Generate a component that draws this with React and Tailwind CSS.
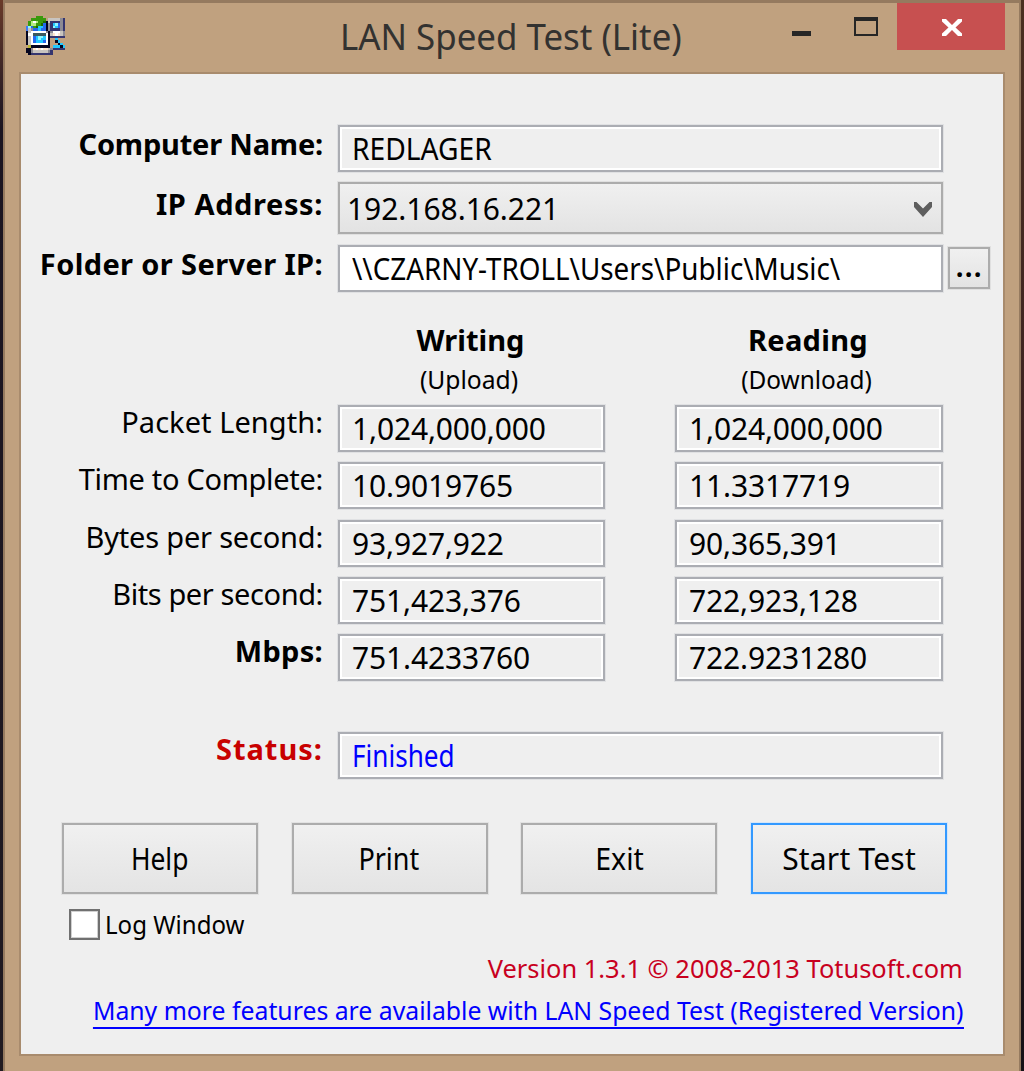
import React from "react";

const PALETTE = {
  K: "#05051f",
  N: "#35356f",
  W: "#ffffff",
  G: "#c8c4c0",
  S: "#8c8a94",
  T: "#3a5a60",
  g: "#3a9a0c",
  D: "#1d6a00",
  L: "#b4ec80",
  B: "#2468ee",
  b: "#3f7af5",
  C: "#22c8ff",
  c: "#8ff8ff",
  Y: "#ffe6cf",
  y: "#b8b432",
};

const ICON = [
  "....ggg.........",
  "..gggggg.GGGGGSN",
  ".gLWLggDKGNNNNSN",
  ".gLLggDBKSNCcBSN",
  "bcBgDCCBKSNcCBSN",
  "bGSBBCBBKSNNNNSN",
  "KGWWWWWWSKSWWWGS",
  "KWWTTTTTWKGYWYGS",
  "KGWBCccCWKNNNNNN",
  "KGWBCcCCWK..C...",
  "KGWBCCCBWK..KC..",
  "KGWWWWWWWK...KC.",
  ".yKKKKKKKK.CCCKC",
  "KKSYWYWYYGSNNNNN",
  "KKSGGGGGGSN.....",
  ".KNNNNNNNNN.....",
];

function AppIcon() {
  return (
    <svg className="h-[39px] w-[39px]" viewBox="0 0 16 16" shapeRendering="crispEdges">
      {ICON.flatMap((row, y) =>
        [...row].map((k, x) =>
          k === "." ? null : (
            <rect key={x + "-" + y} x={x} y={y} width="1.02" height="1.02" fill={PALETTE[k]} />
          )
        )
      )}
    </svg>
  );
}

function Label({ children, className }) {
  return (
    <div className={"w-[301px] shrink-0 text-right text-[29px] whitespace-nowrap " + className}>
      {children}
    </div>
  );
}

function Field({ children, className }) {
  return (
    <div
      className={
        "flex h-[47px] shrink-0 items-center border-2 border-[#abadb3] bg-[#efefef] pl-[12px] text-[30px] whitespace-nowrap inset-ring-2 inset-ring-white shadow-[0_0_0_1px_#e0e1e3] " +
        className
      }
    >
      {children}
    </div>
  );
}

function Button({ children, className = "border-[#acacac] shadow-[0_0_0_1px_#e2e2e2]" }) {
  return (
    <button
      className={
        "flex h-[71px] w-[196px] items-center justify-center border-2 bg-linear-to-b from-[#f0f0f0] to-[#e4e4e4] text-[30px] whitespace-nowrap " +
        className
      }
    >
      {children}
    </button>
  );
}

const RESULTS = [
  ["Packet Length:", "tracking-[0.05px]", "1,024,000,000", "1,024,000,000"],
  ["Time to Complete:", "tracking-[-0.3px]", "10.9019765", "11.3317719"],
  ["Bytes per second:", "tracking-[-0.2px]", "93,927,922", "90,365,391"],
  ["Bits per second:", "tracking-[-0.4px]", "751,423,376", "722,923,128"],
  ["Mbps:", "font-bold tracking-[0.3px]", "751.4233760", "722.9231280"],
];

export default function App() {
  return (
    <div className="flex h-[1071px] w-[1024px] overflow-hidden bg-[#c0a17f] font-['Noto_Sans',sans-serif] text-black">
      <div className="w-[3px] shrink-0 bg-linear-to-b from-[#6a3a28] via-[#1a1420] via-12% to-[#201a20]" />
      <div className="flex w-[1018px] shrink-0 flex-col border-x-2 border-t-3 border-[#957a5f]">
        <header className="flex h-[69px] shrink-0 items-start">
          <div className="mt-[13px] ml-[21px]">
            <AppIcon />
          </div>
          <h1 className="mt-[8px] ml-[275px] w-[448px] shrink-0 origin-left scale-x-[0.942] text-[37px] leading-[50px] whitespace-nowrap text-[#333230]">
            LAN Speed Test (Lite)
          </h1>
          <div className="mt-[28px] ml-[4px] h-[5px] w-[19px] shrink-0 bg-[#262626]" />
          <div className="mt-[14px] ml-[43px] h-[19px] w-[24px] shrink-0 border-2 border-t-4 border-[#262626]" />
          <button className="ml-[19px] flex h-[47px] w-[108px] shrink-0 items-center justify-center bg-[#c75050]">
            <svg className="mt-[1px] ml-[2px] h-[17px] w-[20px]" viewBox="0 0 20 17">
              <path d="M0 0H4L10 6 16 0H20V2.5L13.5 8.5 20 14.500V17H16L10 11 4 17H0V14.500L6.500 8.500 0 2.500Z" fill="#fff" />
            </svg>
          </button>
        </header>

        <main className="ml-[14px] flex h-[984px] w-[986px] flex-col border-2 border-[#a88b6d] bg-[#efefef] pl-px">
          <div className="mt-[51px] flex">
            <Label className="leading-[38px] font-bold tracking-[-0.2px]">Computer Name:</Label>
            <Field className="ml-[15px] w-[605px]">
              <span className="origin-left scale-x-[0.94]">REDLAGER</span>
            </Field>
          </div>
          <div className="mt-[10px] flex">
            <Label className="leading-[44px] font-bold tracking-[0.6px]">IP Address:</Label>
            <div className="ml-[15px] flex h-[52px] w-[605px] items-center justify-between border-2 border-[#acacac] bg-linear-to-b from-[#f0f0f0] to-[#e3e3e3] pr-[9px] pl-[7px] text-[30px] tracking-[-0.05px] shadow-[0_0_0_1px_#e0e0e0]">
              <span>192.168.16.221</span>
              <svg className="mt-[3px] h-[15px] w-[18px]" viewBox="0 0 18 15">
                <path d="M0 0 2.5 0 9 6.5 15.5 0 18 0 18 5 9 15 0 5Z" fill="#5e5e5e" />
              </svg>
            </div>
          </div>
          <div className="mt-[11px] flex">
            <Label className="leading-[37px] font-bold tracking-[0.38px]">Folder or Server IP:</Label>
            <Field className="ml-[15px] w-[605px] bg-white!">
              <span className="origin-left scale-x-[0.927]">{"\\\\CZARNY-TROLL\\Users\\Public\\Music\\"}</span>
            </Field>
            <button className="mt-[2px] ml-[5px] flex h-[42px] w-[42px] items-end justify-center border-2 border-[#acacac] bg-linear-to-b from-[#f0f0f0] to-[#e3e3e3] text-[30px] leading-[42px] font-semibold shadow-[0_0_0_1px_#e0e0e0]">
              <span className="tracking-[0.8px]">...</span>
            </button>
          </div>

          <div className="mt-[30px] ml-[315px] flex text-center whitespace-nowrap">
            <div className="w-[267px]">
              <div className="h-[40px] text-[29px] leading-[36px] font-bold">Writing</div>
              <div className="-ml-[3px] scale-x-[0.948] text-[26px] leading-[35px]">(Upload)</div>
            </div>
            <div className="ml-[70px] w-[268px]">
              <div className="h-[40px] text-[29px] leading-[36px] font-bold tracking-[0.3px]">Reading</div>
              <div className="-ml-[3px] scale-x-[0.938] text-[26px] leading-[35px]">(Download)</div>
            </div>
          </div>

          <div className="mt-[8px] flex flex-col gap-[10.3px]">
            {RESULTS.map(([label, style, writing, reading]) => (
              <div key={label} className="flex">
                <Label className={"leading-[33px] " + style}>{label}</Label>
                <Field className="ml-[15px] w-[267px] tracking-[-0.15px]">{writing}</Field>
                <Field className="ml-[70px] w-[268px] tracking-[-0.15px]">{reading}</Field>
              </div>
            ))}
          </div>

          <div className="mt-[51px] flex">
            <Label className="leading-[33px] font-bold tracking-[1px] text-[#c80000]">Status:</Label>
            <Field className="ml-[15px] w-[605px] text-[#0000ff]">
              <span className="origin-left scale-x-[0.87]">Finished</span>
            </Field>
          </div>

          <div className="mt-[44px] ml-[40px] flex gap-[33.7px]">
            <Button>
              <span className="scale-x-[0.88]">Help</span>
            </Button>
            <Button>
              <span className="-ml-[2px] scale-x-[0.9]">Print</span>
            </Button>
            <Button>
              <span className="scale-x-[0.95]">Exit</span>
            </Button>
            <Button className="border-[#3399ff] tracking-[0.2px] shadow-[0_0_0_1px_#d5e6f8]">Start Test</Button>
          </div>

          <label className="mt-[15px] ml-[47px] flex h-[31px] items-center text-[26px] whitespace-nowrap">
            <span className="h-[31px] w-[31px] shrink-0 border-2 border-[#707070] bg-white shadow-[inset_0_0_0_1px_#d0d0d0]" />
            <span className="ml-[5px] origin-left scale-x-[0.925]">Log Window</span>
          </label>

          <div className="mt-[10px] mr-[40px] origin-right scale-x-[0.978] self-end text-[26px] leading-[36px] whitespace-nowrap text-[#c8001e]">
            Version 1.3.1 © 2008-2013 Totusoft.com
          </div>
          <a className="mt-[7px] mr-[40px] h-[36px] origin-right scale-x-[0.953] self-end border-b-2 border-[#0000ff] text-[26px] leading-[35px] whitespace-nowrap text-[#0000ff]">
            Many more features are available with LAN Speed Test (Registered Version)
          </a>
        </main>
      </div>
      <div className="w-[3px] shrink-0 bg-linear-to-b from-[#4a3020] via-[#3a2020] to-[#151015]" />
    </div>
  );
}
